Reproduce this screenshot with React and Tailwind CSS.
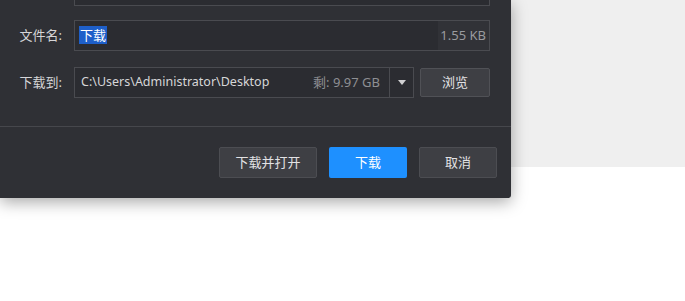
import React from "react";

export default function App() {
  const font = { fontFamily: '"Noto Sans", "Noto Sans CJK SC", sans-serif' };
  return (
    <div className="relative w-[685px] h-[301px] bg-white overflow-hidden" style={font}>
      <div className="h-[167px] bg-[#efefef]" />
      <div className="absolute left-0 top-0 w-[511px] h-[198px] bg-[#2f3035] rounded-br-[3px] shadow-[0_4px_16px_rgba(0,0,0,0.35)] flex flex-col text-[13px]">
        <div className="ml-[74px] w-[416px] h-[6px] border-x border-b border-[#4a4b50] bg-[#2b2c31]" />
        <div className="flex items-center mt-[14px] h-[31px]">
          <div className="w-[74px] pr-[12px] text-right text-[#d6d6d8]">文件名:</div>
          <div className="w-[416px] h-[31px] border border-[#4a4b50] bg-[#2b2c31] flex items-center">
            <div className="flex-1 pl-[4px]">
              <span className="bg-[#1e5fc9] text-white px-[1px] leading-[18px] inline-block">下载</span>
            </div>
            <div className="h-full bg-[#313237] flex items-center pl-[2px] pr-[3px] text-[#9a9b9f]">1.55 KB</div>
          </div>
        </div>
        <div className="flex items-center mt-[16px] h-[31px]">
          <div className="w-[74px] pr-[12px] text-right text-[#d6d6d8]">下载到:</div>
          <div className="w-[340px] h-[31px] border border-[#4a4b50] bg-[#2b2c31] flex items-center">
            <div className="flex-1 pl-[6px] text-[12.5px] text-[#d6d6d8] whitespace-nowrap">C:\Users\Administrator\Desktop</div>
            <div className="pr-[9px] text-[#8e8f93] whitespace-nowrap">剩: 9.97 GB</div>
            <div className="w-[24px] h-full border-l border-[#4a4b50] flex items-center justify-center">
              <svg width="8" height="5" viewBox="0 0 8 5"><path d="M0 0H8L4 5Z" fill="#d0d0d2" /></svg>
            </div>
          </div>
          <button className="ml-[6px] w-[70px] h-[29px] rounded-[2px] bg-[#3e3f44] border border-[#505156] text-[#e2e2e4]">浏览</button>
        </div>
        <div className="mt-[28px] border-t border-[#46474c]" />
        <div className="flex justify-end gap-[12px] pr-[14px] mt-[20px]">
          <button className="w-[98px] h-[31px] rounded-[2px] bg-[#3e3f44] border border-[#4c4d52] text-[#e2e2e4]">下载并打开</button>
          <button className="w-[78px] h-[31px] rounded-[2px] bg-[#1e90ff] text-white">下载</button>
          <button className="w-[78px] h-[31px] rounded-[2px] bg-[#3e3f44] border border-[#4c4d52] text-[#e2e2e4]">取消</button>
        </div>
      </div>
    </div>
  );
}
